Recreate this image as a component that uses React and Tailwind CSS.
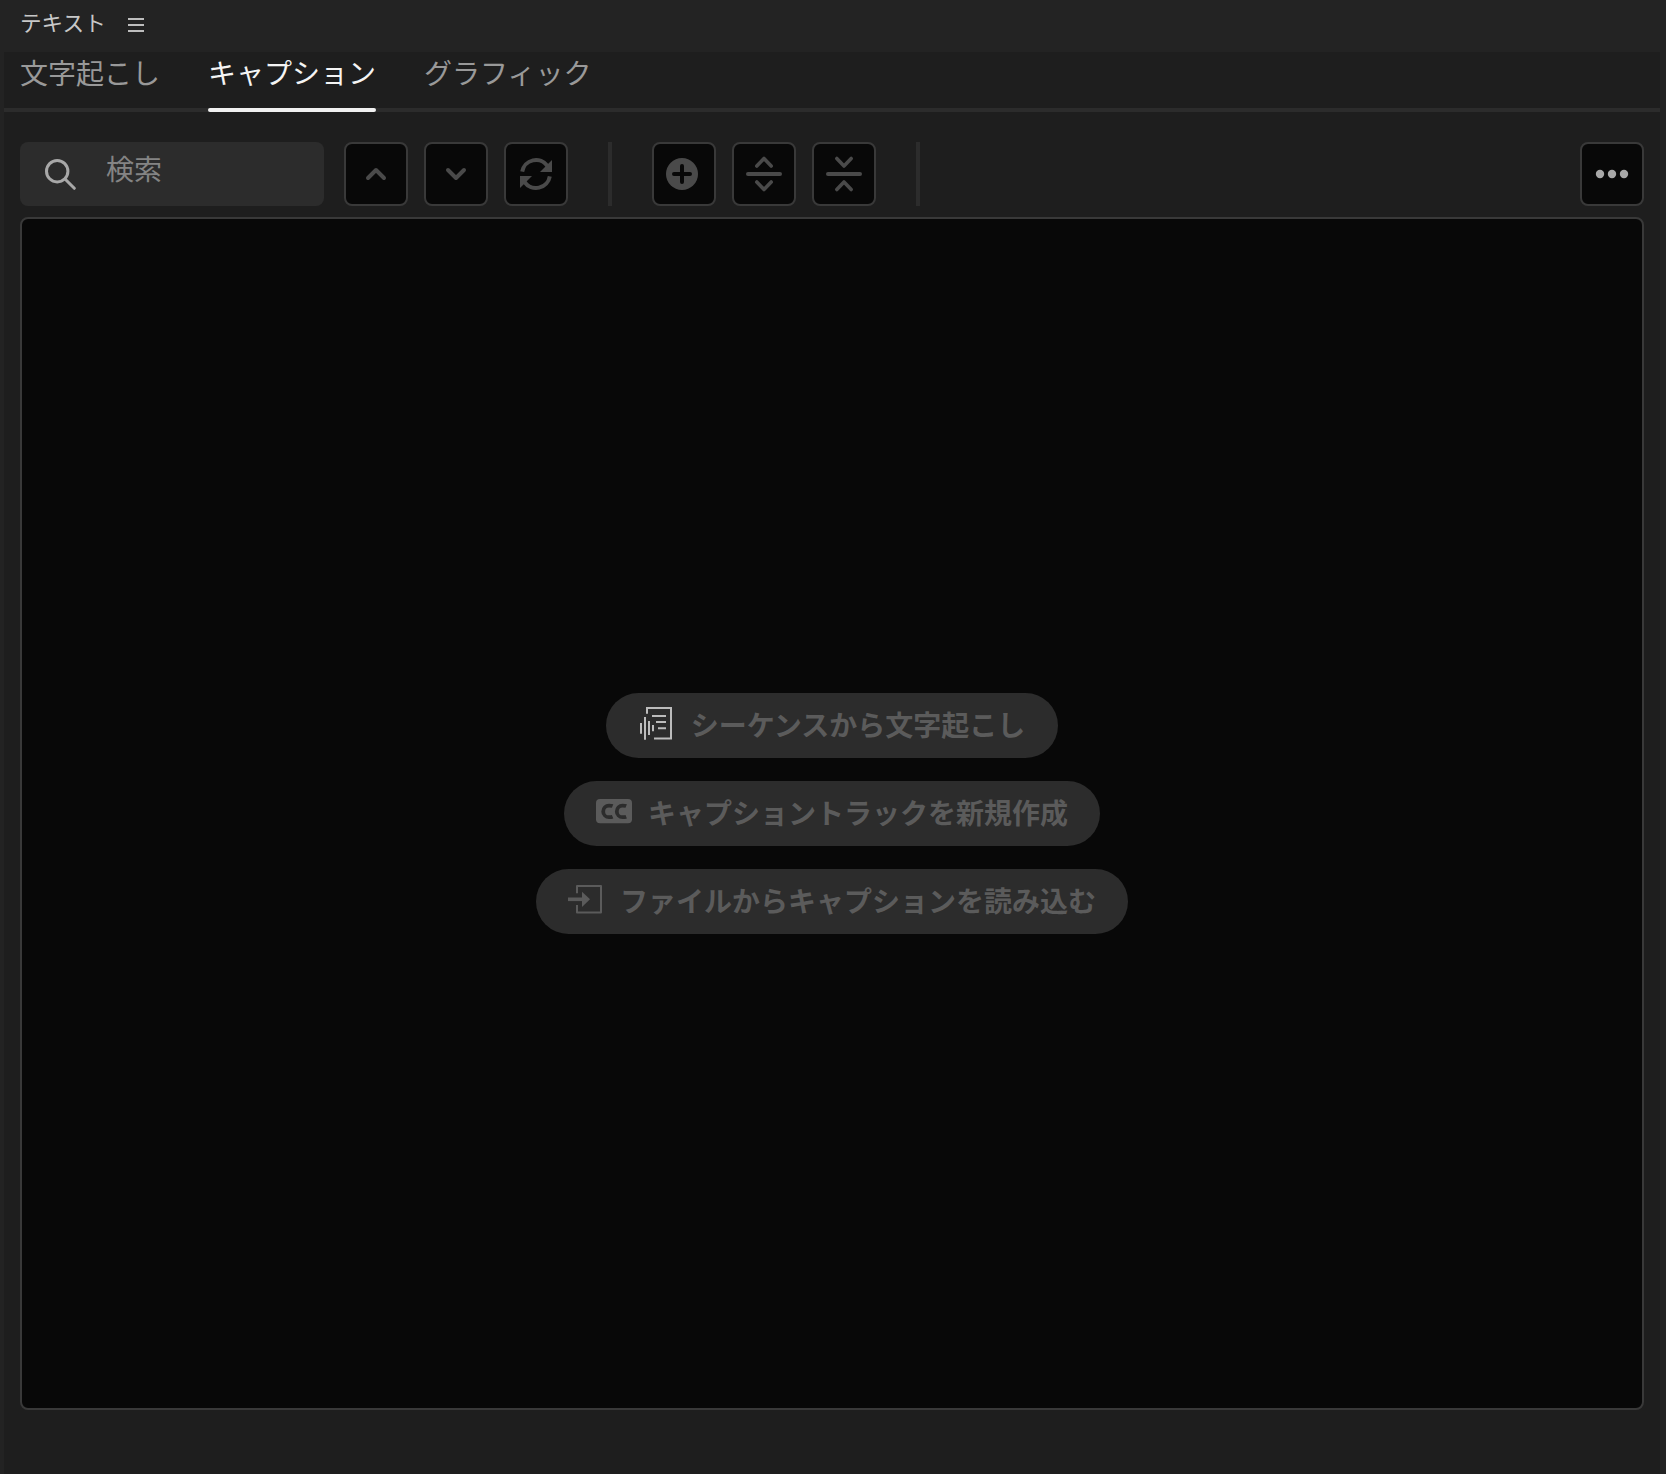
const tabs = [
  { label: '文字起こし' },
  { label: 'キャプション', active: true },
  { label: 'グラフィック' },
];

function ToolButton({ label, children }) {
  return (
    <button
      aria-label={label}
      className="flex size-16 shrink-0 items-center justify-center rounded-lg border-2 border-[#393939] bg-[#080808] text-[#4a4a4a]"
    >
      <svg
        viewBox="0 0 64 64"
        className="size-16 shrink-0"
        fill="none"
        stroke="currentColor"
        strokeWidth="4"
        strokeLinecap="round"
        strokeLinejoin="round"
      >
        {children}
      </svg>
    </button>
  );
}

function Divider() {
  return <div className="h-16 w-1 shrink-0 bg-[#2c2c2c]" />;
}

function TranscribeIcon() {
  return (
    <svg viewBox="0 0 36 36" className="mt-3 mr-px size-9 text-[#bcbcbc]" fill="none" stroke="currentColor" strokeWidth="2">
      <path d="M9 8.7V3H33V33.4H16" />
      <path d="M14 11H28M18 17H28M20 23.2H28" />
      <path d="M3 18V28.7M7 12V34.7M11 16V30M15 20V26.3" />
    </svg>
  );
}

function CaptionsIcon() {
  return (
    <svg viewBox="0 0 36 36" className="mt-3 size-9" fill="none">
      <rect x="0" y="6" width="36" height="24.3" rx="4" fill="currentColor" />
      <path
        d="M16.6 13.1C15.6 12.7 14.5 12.6 13 12.6A5.8 5.8 0 0 0 13 24.2C14.5 24.2 15.6 24.1 16.6 23.7M30.2 13.1C29.2 12.7 28.1 12.6 26.6 12.6A5.8 5.8 0 0 0 26.6 24.2C28.1 24.2 29.2 24.1 30.2 23.7"
        stroke="#2c2c2c"
        strokeWidth="3.8"
      />
    </svg>
  );
}

function ImportIcon() {
  return (
    <svg viewBox="0 0 36 36" className="mt-3 size-9" fill="none" stroke="currentColor" strokeWidth="2">
      <path d="M9 12.3V5H33V31.6H9V24" strokeLinejoin="round" />
      <path d="M0 18.3H15" strokeWidth="3.6" />
      <path d="M14 10.7L22 18.3L14 26Z" fill="currentColor" stroke="none" />
    </svg>
  );
}

function PillButton({ icon, wide, children }) {
  return (
    <button className="flex h-[65px] items-start gap-4 rounded-full bg-[#2c2c2c] px-8 text-[28px] font-bold text-[#5b5b5b]">
      {icon}
      <span className={wide ? 'pr-px leading-[63px] whitespace-nowrap' : 'leading-[63px] whitespace-nowrap'}>
        {children}
      </span>
    </button>
  );
}

export default function App() {
  return (
    <div className="flex h-[1474px] w-[1666px] flex-col overflow-hidden bg-[#232323] pr-1.5 pl-1 font-['Noto_Sans_CJK_JP',sans-serif]">
      <header className="flex h-13 shrink-0 items-start pl-4">
        <h1 className="w-27 text-[21.6px] leading-[43px] whitespace-nowrap text-[#c8c8c8]">テキスト</h1>
        <svg viewBox="0 0 16 14" className="mt-[18px] h-3.5 w-4 text-[#bebebe]" stroke="currentColor" strokeWidth="2">
          <path d="M0 1H16M0 7H16M0 13H16" />
        </svg>
      </header>

      <main className="flex min-h-0 grow flex-col bg-[#1e1e1e]">
        <nav className="flex h-15 shrink-0 gap-12 border-b-4 border-[#2c2c2c] pl-4 text-[28px] leading-[40px]">
          {tabs.map((tab) => (
            <div
              key={tab.label}
              className={tab.active ? 'flex h-15 flex-col justify-between text-[#f4f4f4]' : 'h-15 text-[#999999]'}
            >
              <span>{tab.label}</span>
              {tab.active && <div className="h-1 rounded-full bg-[#f1f1f1]" />}
            </div>
          ))}
        </nav>

        <div className="mt-[30px] flex shrink-0 px-4">
          <div className="flex h-16 w-[304px] items-start rounded-lg bg-[#2c2c2c] text-[#848484]">
            <svg
              viewBox="0 0 32 32"
              className="mt-4 ml-[24px] size-8 text-[#a8a8a8]"
              fill="none"
              stroke="currentColor"
              strokeWidth="3"
              strokeLinecap="round"
            >
              <circle cx="13.2" cy="13.2" r="10.7" />
              <path d="M21 21L30.3 30.3" />
            </svg>
            <span className="ml-[30px] text-[28px] leading-[52px]">検索</span>
          </div>

          <div className="ml-5 flex gap-4">
            <ToolButton label="前を検索">
              <path d="M24 36L32 28L40 36" />
            </ToolButton>
            <ToolButton label="次を検索">
              <path d="M24 28L32 36L40 28" />
            </ToolButton>
            <ToolButton label="置換">
              <g strokeLinecap="butt">
                <path d="M18.2 29.7A14 14 0 0 1 43.5 24" />
                <path d="M45.8 34.3A14 14 0 0 1 20.5 40" />
              </g>
              <path d="M48 18V30H36Z" fill="currentColor" stroke="none" />
              <path d="M16 46V34H28Z" fill="currentColor" stroke="none" />
            </ToolButton>
          </div>

          <div className="mx-10 flex gap-10">
            <Divider />
            <div className="flex gap-4">
              <ToolButton label="追加">
                <circle cx="30" cy="32" r="16" fill="currentColor" stroke="none" />
                <path d="M22 32H38M30 24V40" stroke="#080808" />
              </ToolButton>
              <ToolButton label="分割">
                <path d="M16 32H48" />
                <path d="M24.8 24L32 16.5L39.2 24M24.8 40L32 47.5L39.2 40" strokeWidth="3.6" />
              </ToolButton>
              <ToolButton label="結合">
                <path d="M16 32H48" />
                <path d="M24.8 16.5L32 24L39.2 16.5M24.8 47.5L32 40L39.2 47.5" strokeWidth="3.6" />
              </ToolButton>
            </div>
            <Divider />
          </div>

          <div className="ml-auto">
            <ToolButton label="その他">
              <g fill="#a8a8a8" stroke="none">
                <circle cx="20" cy="32" r="4.2" />
                <circle cx="32" cy="32" r="4.2" />
                <circle cx="44" cy="32" r="4.2" />
              </g>
            </ToolButton>
          </div>
        </div>

        <section className="mx-4 mt-[11px] mb-16 flex grow flex-col items-center justify-center gap-[23px] rounded-lg border-2 border-[#393939] bg-[#080808]">
          <PillButton wide icon={<TranscribeIcon />}>シーケンスから文字起こし</PillButton>
          <PillButton icon={<CaptionsIcon />}>キャプショントラックを新規作成</PillButton>
          <PillButton icon={<ImportIcon />}>ファイルからキャプションを読み込む</PillButton>
        </section>
      </main>
    </div>
  );
}
